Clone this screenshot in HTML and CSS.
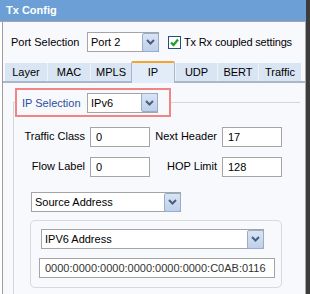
FILE: index.html
```html
<!DOCTYPE html>
<html lang="en">
<head>
    <meta charset="UTF-8">
    <title>Tx Config</title>
    <link rel="stylesheet" href="styles.css">
</head>
<body>
    <div class="window">
        <div class="titlebar">Tx Config</div>
        <div class="content">
            <div class="port-row">
                <span class="port-label">Port Selection</span>
                <div class="combo port-combo">
                    <span class="combo-text">Port 2</span>
                    <span class="combo-btn"><svg width="9" height="6" viewBox="0 0 9 6"><path d="M1 1 L4.5 4.5 L8 1" fill="none" stroke="#4a5d7e" stroke-width="2"/></svg></span>
                </div>
                <label class="check">
                    <span class="check-box"><svg width="11" height="11" viewBox="0 0 11 11"><path d="M2 5.5 L4.5 8 L9 2.5" fill="none" stroke="#22a022" stroke-width="2.2"/></svg></span>
                    Tx Rx coupled settings
                </label>
            </div>

            <div class="tabbar">
                <div class="tabs">
                    <span class="tab tab-layer">Layer</span>
                    <span class="tab tab-mac">MAC</span>
                    <span class="tab tab-mpls">MPLS</span>
                    <span class="tab tab-ip active">IP</span>
                    <span class="tab tab-udp">UDP</span>
                    <span class="tab tab-bert">BERT</span>
                    <span class="tab tab-traffic">Traffic</span>
                </div>
            </div>

            <fieldset class="ip-group">
                <legend>
                    <div class="highlight">
                        <span class="ip-label">IP Selection</span>
                        <div class="combo ip-combo">
                            <span class="combo-text">IPv6</span>
                            <span class="combo-btn"><svg width="9" height="6" viewBox="0 0 9 6"><path d="M1 1 L4.5 4.5 L8 1" fill="none" stroke="#4a5d7e" stroke-width="2"/></svg></span>
                        </div>
                    </div>
                </legend>

                <div class="fields">
                    <span class="field-label">Traffic Class</span>
                    <span class="field">0</span>
                    <span class="field-label">Next Header</span>
                    <span class="field">17</span>
                    <span class="field-label">Flow Label</span>
                    <span class="field">0</span>
                    <span class="field-label">HOP Limit</span>
                    <span class="field">128</span>
                </div>

                <div class="combo source-combo">
                    <span class="combo-text">Source Address</span>
                    <span class="combo-btn"><svg width="9" height="6" viewBox="0 0 9 6"><path d="M1 1 L4.5 4.5 L8 1" fill="none" stroke="#4a5d7e" stroke-width="2"/></svg></span>
                </div>

                <div class="addr-box">
                    <div class="combo addr-combo">
                        <span class="combo-text">IPV6 Address</span>
                        <span class="combo-btn"><svg width="9" height="6" viewBox="0 0 9 6"><path d="M1 1 L4.5 4.5 L8 1" fill="none" stroke="#4a5d7e" stroke-width="2"/></svg></span>
                    </div>
                    <span class="field addr-field">0000:0000:0000:0000:0000:0000:C0AB:0116</span>
                </div>
            </fieldset>
        </div>
    </div>
</body>
</html>
```

FILE: styles.css
```css
* {
    box-sizing: border-box;
    margin: 0;
    padding: 0;
}

body {
    font-family: "Liberation Sans", Arial, sans-serif;
    font-size: 11px;
    color: #000;
    background: #fff;
}

.window {
    width: 310px;
    height: 294px;
    display: flex;
    flex-direction: column;
    border-right: 4px solid #3c3c3c;
    background: #fff;
}

.titlebar {
    height: 22px;
    line-height: 21px;
    padding-left: 6px;
    background: #6b9fd6;
    color: #fff;
    font-size: 11px;
    font-weight: bold;
    border-bottom: 1px solid #a4a4a4;
}

.content {
    flex: 1;
    margin-left: 2px;
    border-left: 1px solid #9c9c9c;
    border-right: 1px solid #a8a8a8;
    background: #f8f9fd;
    overflow: hidden;
}

/* port row */
.port-row {
    display: flex;
    align-items: center;
    padding: 10px 0 0 8px;
    height: 30px;
}

.port-label {
    width: 76px;
}

.combo {
    display: flex;
    align-items: center;
    height: 20px;
    background: #fff;
    border: 1px solid #a5a5a5;
}

.combo-text {
    flex: 1;
    padding-left: 3px;
    white-space: nowrap;
}

.combo-btn {
    width: 17px;
    height: 19px;
    margin-right: -1px;
    display: flex;
    align-items: center;
    justify-content: center;
    background: linear-gradient(#d9e4f4, #bfd0ea);
    border: 1px solid #98adca;
    border-radius: 2px;
}

.port-combo {
    width: 72px;
}

.check {
    display: flex;
    align-items: center;
    margin-left: 9px;
    letter-spacing: -0.15px;
}

.check-box {
    width: 13px;
    height: 13px;
    margin-right: 3px;
    background: #fff;
    border: 1px solid #1c5180;
    display: flex;
    align-items: center;
    justify-content: center;
}

/* tabs */
.tabbar {
    margin-top: 9px;
    padding-left: 2px;
    border-bottom: 2px solid #a9b7c8;
}

.tabs {
    display: flex;
    align-items: flex-end;
    width: 296px;
    height: 20px;
}

.tab {
    height: 18px;
    line-height: 19px;
    text-align: center;
    background: #dae5f3;
    border-left: 1px solid #eef3fa;
}

.tab-layer { width: 42px; border-left: none; }
.tab-mac { width: 43px; }
.tab-mpls { width: 41px; }
.tab-udp { width: 42px; }
.tab-bert { width: 41px; }
.tab-traffic { width: 43px; }

.tab.active {
    width: 44px;
    height: 22px;
    line-height: 19px;
    margin-bottom: -2px;
    background: #e2ebf8;
    border-top: 2px solid #f2a52e;
    border-left: 1px solid #a9b7c8;
    border-right: 1px solid #a9b7c8;
    border-radius: 2px 2px 0 0;
}

/* ip selection group */
.ip-group {
    margin: 5px 5px 0 10px;
    padding: 0 0 0 1px;
    border: 1px solid #d4d6da;
    border-right: none;
    border-bottom: none;
    height: 220px;
}

.ip-group legend {
    padding: 0;
}

.highlight {
    display: flex;
    align-items: center;
    height: 29px;
    width: 156px;
    padding-left: 5px;
    border: 2px solid #f08585;
}

.ip-label {
    width: 65px;
    color: #2a4f9c;
}

.ip-combo {
    width: 71px;
}

.fields {
    display: grid;
    grid-template-columns: 70px 60px 62px 60px;
    grid-auto-rows: 20px;
    column-gap: 5px;
    row-gap: 10px;
    margin-top: 10px;
}

.field-label {
    text-align: right;
    line-height: 18px;
}

.field {
    display: block;
    height: 20px;
    line-height: 19px;
    padding-left: 5px;
    background: #fff;
    border: 1px solid #a5a5a5;
    white-space: nowrap;
}

.source-combo {
    width: 150px;
    margin: 15px 0 0 16px;
}

.addr-box {
    width: 252px;
    margin: 8px 0 0 15px;
    padding: 8px 0 9px 8px;
    border: 1px solid #d8d9dc;
    border-radius: 5px;
    display: flex;
    flex-direction: column;
    gap: 9px;
}

.addr-combo {
    width: 223px;
    margin-left: 2px;
}

.addr-field {
    width: 236px;
    color: #333;
}
```
